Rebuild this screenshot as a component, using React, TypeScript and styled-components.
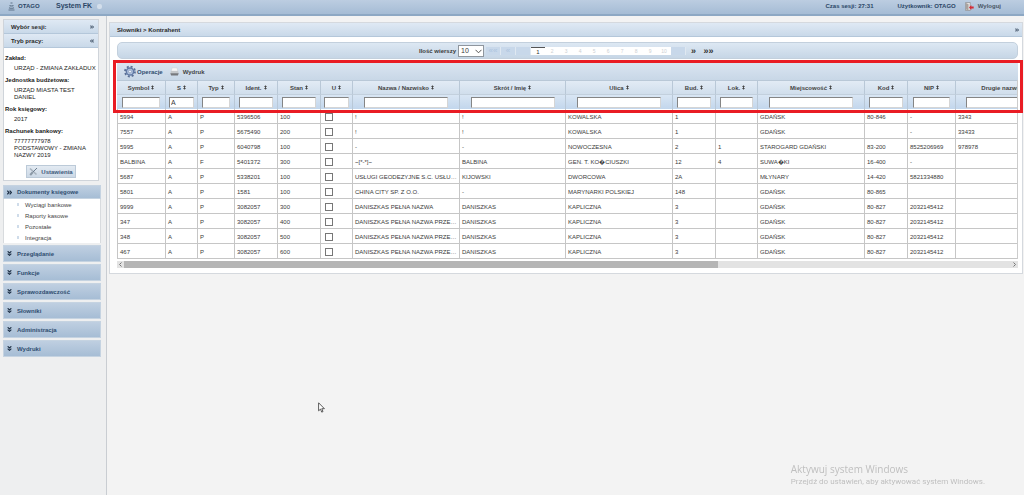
import React from "react";
import styled, { createGlobalStyle, css } from "styled-components";

const Global = createGlobalStyle`
  *, *::before, *::after { box-sizing: border-box; }
  body {
    margin: 0;
    background: #f3f3f3;
    color: #3a3a3a;
    font: 6px/8px "Liberation Sans", Arial, sans-serif;
    overflow: hidden;
  }
  input, select, button { font: inherit; color: inherit; margin: 0; }
  a { color: inherit; text-decoration: none; }
  ul, dl, dd, h1, h2 { margin: 0; padding: 0; list-style: none; font-size: inherit; }
`;

const paleBlue = css`
  background: linear-gradient(#dfe9f4, #c9d9e9);
`;

const Page = styled.div`
  min-height: 100vh;
  display: flex;
  flex-direction: column;
`;

const TopBar = styled.header`
  height: 16px;
  display: flex;
  align-items: center;
  padding: 0 23px 2px 8px;
  background: linear-gradient(#bccde1, #a5bcd5);
  border-bottom: 2px solid #8da8c4;
  color: #2b4666;
  font-weight: bold;
`;

const Brand = styled.div`
  display: flex;
  align-items: center;
  gap: 3px;
  width: 48px;
`;

const AppName = styled.h1`
  font-size: 7px;
  line-height: 10px;
  margin-right: 5px;
`;

const Dot = styled.span`
  width: 5px;
  height: 5px;
  border-radius: 2px;
  background: #d3deeb;
`;

const Session = styled.div`
  margin-left: auto;
  display: flex;
  align-items: center;
  gap: 24px;
`;

const Account = styled.div`
  display: flex;
  align-items: center;
  gap: 9px;
`;

const Logout = styled.a`
  display: flex;
  align-items: center;
  gap: 4px;
  color: #4a5666;
`;

const Body = styled.div`
  flex: 1;
  display: flex;
`;

const Sidebar = styled.aside`
  flex: 0 0 107px;
  padding: 3px 5px 0 3px;
  border-right: 1px solid #c9cdd2;
  background: #eeeff0;
`;

const SessionBox = styled.section`
  border: 1px solid #cfd4da;
  background: #fff;
  height: 162px;
  margin: 0 2px 4px 0;
`;

const BoxTitle = styled.h2`
  ${paleBlue}
  height: 14px;
  display: flex;
  align-items: center;
  justify-content: space-between;
  padding: 0 4px 0 7px;
  border-bottom: 1px solid #b4c7da;
  color: #2a2a2a;
`;

const Facts = styled.dl`
  padding: 6px 0 0 1px;
  color: #222;
`;

const FactName = styled.dt`
  font-weight: bold;
  line-height: 8px;
`;

const FactValue = styled.dd`
  padding: 3px 0 4px 9px;
  line-height: 7px;
  white-space: pre;
`;

const SettingsButton = styled.button`
  display: flex;
  align-items: center;
  gap: 3px;
  height: 13px;
  margin: 2px auto 0;
  padding: 0 2px;
  border: 1px solid #bccad8;
  background: linear-gradient(#e3eaf2, #ccd9e6);
  color: #3e5a7c;
  font-weight: bold;
`;

const Menu = styled.ul`
  display: flex;
  flex-direction: column;
  gap: 2px;
`;

const MenuGroup = styled.button<{ $open?: boolean }>`
  display: flex;
  align-items: center;
  gap: 5px;
  width: 98px;
  height: ${(p) => (p.$open ? 14 : 17)}px;
  padding: 0 3px;
  border: 1px solid #c5d3e1;
  background: linear-gradient(#bfcfe1, #a6bdd5);
  color: #2f4d70;
  font-weight: bold;
`;

const SubMenu = styled.ul`
  width: 98px;
  padding-left: 13px;
  background: #fff;
  border: 1px solid #d8dbde;
  border-width: 0 1px;
`;

const SubItem = styled.li`
  display: flex;
  align-items: center;
  gap: 6px;
  height: 11px;
  color: #444;
`;

const Bullet = styled.span`
  width: 2px;
  height: 3px;
  background: #cfdcea;
`;

const Main = styled.main`
  flex: 1;
  min-width: 0;
  padding: 6px 1px 0 2px;
`;

const Panel = styled.section`
  border: 1px solid #d5d9de;
  background: #fff;
  padding-bottom: 5px;
`;

const PanelTitle = styled(BoxTitle)`
  padding: 0 3px 0 7px;
`;

const PanelBody = styled.div`
  padding: 5px 4px 0 7px;
`;

const Pager = styled.nav`
  display: flex;
  align-items: center;
  justify-content: center;
  height: 17px;
  border: 1px solid #c3d0dd;
  border-radius: 5px;
  background: linear-gradient(#dde8f3, #c6d6e6);
`;

const RowsLabel = styled.label`
  display: flex;
  align-items: center;
  gap: 2px;
  font-weight: bold;
  margin-right: 2px;
`;

const RowsSelect = styled.select`
  width: 26px;
  height: 12px;
  padding: 0 2px;
  appearance: none;
  border: 1px solid #8f969e;
  border-radius: 0;
  font-size: 7px;
  font-weight: normal;
  background: #fff;
`;

const SelectWrap = styled.span`
  position: relative;
  display: flex;
  svg { position: absolute; right: 2px; top: 4px; }
`;

const PageLink = styled.button<{ $kind?: "nav" | "off" | "current" }>`
  width: 14px;
  height: 8px;
  padding: 0;
  border: 0;
  background: #fff;
  color: #ccd0d4;
  font-size: 5px;
  line-height: 8px;
  ${(p) => p.$kind === "off" && css`
    width: 15px;
    background: #c8d8ea;
    border-right: 1px solid #dfe8f1;
    color: #adc4de;
    font-size: 8px;
    line-height: 6px;
  `}
  ${(p) => p.$kind === "nav" && css`
    width: 15px;
    background: none;
    color: #333;
    font-size: 9px;
    font-weight: bold;
    line-height: 6px;
  `}
  ${(p) => p.$kind === "current" && css`
    border-top: 1px solid #555;
    color: #333;
    font-size: 6px;
  `}
`;

const Grid = styled.div`
  position: relative;
  margin-top: 1px;
`;

const Highlight = styled.div`
  position: absolute;
  left: -4px;
  right: -5px;
  top: 0;
  height: 53px;
  border: 3px solid #e91c24;
  pointer-events: none;
`;

const Toolbar = styled.div`
  display: flex;
  align-items: center;
  gap: 7px;
  height: 20px;
  padding: 3px 7px 0;
  background: linear-gradient(#dde7f2, #c8d7e7);
`;

const Tool = styled.button`
  display: flex;
  align-items: center;
  gap: 1px;
  padding: 0;
  border: 0;
  background: none;
  color: #2f4d70;
  font-weight: bold;
`;

const PrintTool = styled(Tool)`
  gap: 4px;
  color: #444;
`;

const Scroller = styled.div`
  overflow: hidden;
  border-right: 1px solid #ccc;
`;

const Table = styled.table`
  width: 943px;
  table-layout: fixed;
  border-collapse: separate;
  border-spacing: 0;
`;

const HeadCell = styled.th`
  height: 14px;
  padding: 0;
  background: linear-gradient(#e2ebf5, #d0deec);
  border-top: 1px solid #b9c8d7;
  border-right: 1px solid #b9c8d7;
  color: #444;
  svg { margin-left: 2px; }
`;

const FilterCell = styled.td`
  height: 15px;
  padding: 0;
  text-align: center;
  vertical-align: middle;
  background: linear-gradient(#d9e6f4, #c2d6ec);
  border-top: 1px solid #c3d0dd;
  border-right: 1px solid #b9c8d7;
`;

const Filter = styled.input`
  display: block;
  width: 80%;
  height: 11px;
  margin: 0 auto;
  padding: 0 1px;
  border: 1px solid #d5d5d5;
  border-top-color: #858585;
  border-left-color: #858585;
  border-radius: 0;
  background: #fff;
  font-size: 7px;
`;

const Cell = styled.td`
  height: 15px;
  padding: 1px 2px 0;
  border-bottom: 1px solid #c6c6c6;
  border-right: 1px solid #c6c6c6;
  background: #fff;
  overflow: hidden;
  white-space: nowrap;
  text-overflow: ellipsis;
  &:first-child { border-left: 1px solid #c6c6c6; }
`;

const Tick = styled.input`
  display: block;
  appearance: none;
  width: 8px;
  height: 8px;
  margin-left: 2px;
  border: 1px solid #777;
  background: #fff;
`;

const ScrollBar = styled.div`
  display: flex;
  align-items: center;
  justify-content: space-between;
  gap: 2px;
  height: 7px;
  margin-top: 2px;
  padding: 0 2px;
  background: #e3e3e3;
`;

const ScrollTrack = styled.div`
  flex: 1;
  height: 7px;
`;

const ScrollThumb = styled.div`
  width: 67%;
  height: 7px;
  background: #b5b5b5;
`;

const Watermark = styled.div`
  position: fixed;
  right: 39px;
  bottom: 8px;
  color: #bfbfbf;
  font-family: Roboto, sans-serif;
  font-size: 8px;
  line-height: 11px;
`;

const WatermarkTitle = styled.div`
  font-family: "Open Sans", sans-serif;
  font-size: 10px;
  line-height: 13px;
`;

const Pointer = styled.svg`
  position: fixed;
  left: 318px;
  top: 402px;
`;

const turns = { down: 0, up: 180, right: -90, left: 90 };

const Chevrons = ({ dir, size = 5 }: { dir: keyof typeof turns; size?: number }) => (
  <svg width={size} height={size} viewBox="0 0 6 6" fill="none" stroke="#1d2f45" strokeWidth="1.4">
    <path d="M.8.4 3 2.4 5.2.4M.8 3.2 3 5.2 5.2 3.2" transform={`rotate(${turns[dir]} 3 3)`} />
  </svg>
);

const SortIcon = () => (
  <svg width="3" height="5" viewBox="0 0 4 6" fill="#444">
    <path d="M2 0 4 2.3H2.6v1.4H4L2 6 0 3.7h1.4V2.3H0z" />
  </svg>
);

const LogoIcon = () => (
  <svg width="7" height="9" viewBox="0 0 7 9" fill="none" stroke="#5f7389">
    <path d="M2.5 1h2M1.5 3.5q2 1 4 0M1 5.7q2.5 1.2 5 0M.5 8h6" strokeWidth="1.1" />
  </svg>
);

const LogoutIcon = () => (
  <svg width="9" height="9" viewBox="0 0 9 9">
    <path d="M.5.5h4.8v8H.5z" fill="#e8e4e2" stroke="#8c8f94" strokeWidth=".7" />
    <path d="M1 1l2.5 1.2v6.3L1 7.5z" fill="#a9a39f" />
    <path d="M4 5.5 6.3 3v1.5h2.4v2H6.3V8z" fill="#d42b35" />
  </svg>
);

const ToolsIcon = () => (
  <svg width="9" height="9" viewBox="0 0 9 9" fill="none">
    <path d="M1 1.5l6.5 6" stroke="#a7b2bd" strokeWidth="1.6" />
    <path d="M8 1 3.5 5.5" stroke="#6c7d8e" strokeWidth="1" />
    <path d="M3.7 5.3 1.2 8" stroke="#8b98a5" strokeWidth="2" />
  </svg>
);

const GearIcon = () => (
  <svg width="12" height="13" viewBox="0 0 12 13" fill="none">
    <circle cx="6" cy="6.5" r="5" stroke="#5a6f95" strokeWidth="1.8" strokeDasharray="2 1.93" />
    <circle cx="6" cy="6.5" r="3.6" fill="#b4c5e0" stroke="#6079a5" strokeWidth="1.5" />
    <circle cx="6" cy="6.5" r="1.5" fill="#eaf0f8" stroke="#7c92b6" strokeWidth=".7" />
  </svg>
);

const PrinterIcon = () => (
  <svg width="9" height="9" viewBox="0 0 9 9">
    <path d="M2 .8h5l.8 3.4H1.2z" fill="#f6f6f6" stroke="#c8ccd0" strokeWidth=".5" />
    <path d="M.9 4h7.2l.6 2.6H.3z" fill="#c4c7ca" />
    <path d="M.3 6.3h8.4L7.9 8.4H1.1z" fill="#77797c" />
  </svg>
);

const columns: [string, number][] = [
  ["Symbol", 49], ["S", 32], ["Typ", 37], ["Ident.", 43], ["Stan", 43], ["U", 32],
  ["Nazwa / Nazwisko", 107], ["Skrót / Imię", 106], ["Ulica", 107], ["Bud.", 43],
  ["Lok.", 42], ["Miejscowość", 107], ["Kod", 43], ["NIP", 48], ["Drugie nazwisko", 104],
];

const rows: string[][] = [
  ["5994", "A", "P", "5396506", "100", "", "!", "!", "KOWALSKA", "1", "", "GDAŃSK", "80-846", "-", "3343"],
  ["7557", "A", "P", "5675490", "200", "", "!", "!", "KOWALSKA", "1", "", "GDAŃSK", "", "-", "33433"],
  ["5995", "A", "P", "6040798", "100", "", "-", "-", "NOWOCZESNA", "2", "1", "STAROGARD GDAŃSKI", "83-200", "8525206969", "978978"],
  ["BALBINA", "A", "F", "5401372", "300", "", "~[*-*]~", "BALBINA", "GEN. T. KO\uFFFDCIUSZKI", "12", "4", "SUWA\uFFFDKI", "16-400", "-", ""],
  ["5687", "A", "P", "5338201", "100", "", "USŁUGI GEODEZYJNE S.C. USŁUGI", "KIJOWSKI", "DWORCOWA", "2A", "", "MŁYNARY", "14-420", "5821334880", ""],
  ["5801", "A", "P", "1581", "100", "", "CHINA CITY SP. Z O.O.", "-", "MARYNARKI POLSKIEJ", "148", "", "GDAŃSK", "80-865", "", ""],
  ["9999", "A", "P", "3082057", "300", "", "DANISZKAS PEŁNA NAZWA", "DANISZKAS", "KAPLICZNA", "3", "", "GDAŃSK", "80-827", "2032145412", ""],
  ["347", "A", "P", "3082057", "400", "", "DANISZKAS PEŁNA NAZWA PRZEDS", "DANISZKAS", "KAPLICZNA", "3", "", "GDAŃSK", "80-827", "2032145412", ""],
  ["348", "A", "P", "3082057", "500", "", "DANISZKAS PEŁNA NAZWA PRZEDS", "DANISZKAS", "KAPLICZNA", "3", "", "GDAŃSK", "80-827", "2032145412", ""],
  ["467", "A", "P", "3082057", "600", "", "DANISZKAS PEŁNA NAZWA PRZEDS", "DANISZKAS", "KAPLICZNA", "3", "", "GDAŃSK", "80-827", "2032145412", ""],
];

const facts = [
  ["Zakład:", "URZĄD - ZMIANA ZAKŁADUX"],
  ["Jednostka budżetowa:", "URZĄD MIASTA TEST\nDANIEL"],
  ["Rok księgowy:", "2017"],
  ["Rachunek bankowy:", "77777777978\nPODSTAWOWY - ZMIANA\nNAZWY 2019"],
];

export default function App() {
  return (
    <Page>
      <Global />
      <TopBar>
        <Brand><LogoIcon />OTAGO</Brand>
        <AppName>System FK</AppName>
        <Dot />
        <Session>
          <span>Czas sesji: 27:31</span>
          <Account>
            <span>Użytkownik: OTAGO</span>
            <Logout href="#"><LogoutIcon />Wyloguj</Logout>
          </Account>
        </Session>
      </TopBar>
      <Body>
        <Sidebar>
          <SessionBox>
            <BoxTitle>Wybór sesji:<Chevrons dir="right" size={4} /></BoxTitle>
            <BoxTitle>Tryb pracy:<Chevrons dir="left" size={4} /></BoxTitle>
            <Facts>
              {facts.map(([name, value]) => (
                <React.Fragment key={name}>
                  <FactName>{name}</FactName>
                  <FactValue>{value}</FactValue>
                </React.Fragment>
              ))}
            </Facts>
            <SettingsButton><ToolsIcon />Ustawienia</SettingsButton>
          </SessionBox>
          <Menu>
            <li>
              <MenuGroup $open><Chevrons dir="right" />Dokumenty księgowe</MenuGroup>
              <SubMenu>
                {["Wyciągi bankowe", "Raporty kasowe", "Pozostałe", "Integracja"].map((t) => (
                  <SubItem key={t}><Bullet /><a href="#">{t}</a></SubItem>
                ))}
              </SubMenu>
            </li>
            {["Przeglądanie", "Funkcje", "Sprawozdawczość", "Słowniki", "Administracja", "Wydruki"].map((t) => (
              <li key={t}><MenuGroup><Chevrons dir="down" />{t}</MenuGroup></li>
            ))}
          </Menu>
        </Sidebar>
        <Main>
          <Panel>
            <PanelTitle>Słowniki &gt; Kontrahent<Chevrons dir="right" size={4} /></PanelTitle>
            <PanelBody>
              <Pager>
                <RowsLabel>
                  Ilość wierszy
                  <SelectWrap>
                    <RowsSelect defaultValue="10"><option>10</option><option>20</option></RowsSelect>
                    <svg width="7" height="5" viewBox="0 0 7 5" fill="none" stroke="#555"><path d="M.5.8l3 3 3-3" /></svg>
                  </SelectWrap>
                </RowsLabel>
                <PageLink $kind="off">««</PageLink>
                <PageLink $kind="off">«</PageLink>
                <PageLink $kind="off" aria-label="-10" />
                {[1, 2, 3, 4, 5, 6, 7, 8, 9, 10].map((n) => (
                  <PageLink key={n} $kind={n === 1 ? "current" : undefined}>{n}</PageLink>
                ))}
                <PageLink $kind="off" aria-label="+10" />
                <PageLink $kind="nav">»</PageLink>
                <PageLink $kind="nav">»»</PageLink>
              </Pager>
              <Grid>
                <Toolbar>
                  <Tool><GearIcon />Operacje</Tool>
                  <PrintTool><PrinterIcon />Wydruk</PrintTool>
                </Toolbar>
                <Scroller>
                  <Table>
                    <colgroup>{columns.map(([name, w]) => <col key={name} width={w} />)}</colgroup>
                    <thead>
                      <tr>{columns.map(([name]) => <HeadCell key={name}>{name}<SortIcon /></HeadCell>)}</tr>
                      <tr>
                        {columns.map(([name]) => (
                          <FilterCell key={name}>
                            <Filter aria-label={name} defaultValue={name === "S" ? "A" : ""} />
                          </FilterCell>
                        ))}
                      </tr>
                    </thead>
                    <tbody>
                      {rows.map((row) => (
                        <tr key={row[0]}>
                          {row.map((value, i) => (
                            <Cell key={i}>
                              {i === 5 ? <Tick type="checkbox" aria-label={`U ${row[0]}`} /> : value}
                            </Cell>
                          ))}
                        </tr>
                      ))}
                    </tbody>
                  </Table>
                </Scroller>
                <Highlight />
              </Grid>
              <ScrollBar>
                <svg width="3" height="5" viewBox="0 0 3 5" fill="none" stroke="#777"><path d="M2.5.5l-2 2 2 2" /></svg>
                <ScrollTrack><ScrollThumb /></ScrollTrack>
                <svg width="3" height="5" viewBox="0 0 3 5" fill="none" stroke="#777"><path d="M.5.5l2 2-2 2" /></svg>
              </ScrollBar>
            </PanelBody>
          </Panel>
        </Main>
      </Body>
      <Watermark>
        <WatermarkTitle>Aktywuj system Windows</WatermarkTitle>
        Przejdź do ustawień, aby aktywować system Windows.
      </Watermark>
      <Pointer width="7" height="11" viewBox="0 0 7 11">
        <path d="M.6.8v8l1.9-1.7 1.2 3 1.3-.5-1.2-2.9h2.6z" fill="#fff" stroke="#333" strokeWidth=".8" />
      </Pointer>
    </Page>
  );
}
